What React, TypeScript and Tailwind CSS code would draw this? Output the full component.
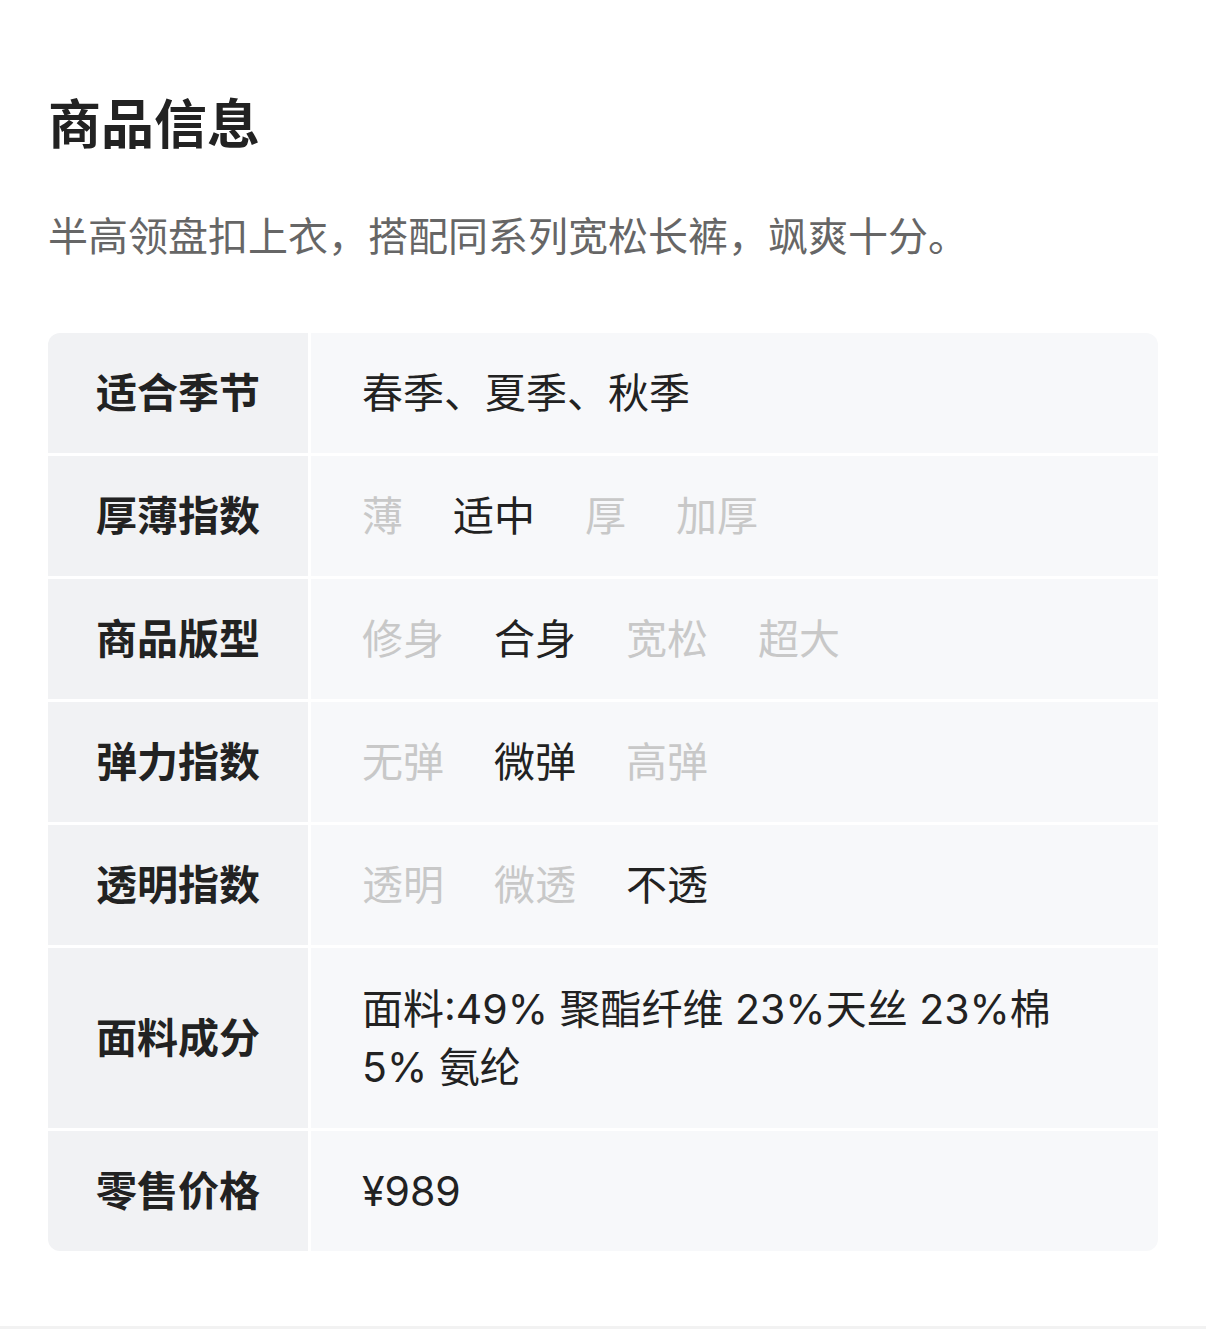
import React from "react";

const font = { fontFamily: "Inter, 'Noto Sans CJK SC', sans-serif" };

type Opt = { t: string; on: boolean };

function Options({ items }: { items: Opt[] }) {
  return (
    <div className="flex gap-[50px]">
      {items.map((o, i) => (
        <span key={i} className={o.on ? "text-[#222222]" : "text-[#c8c8c8]"}>
          {o.t}
        </span>
      ))}
    </div>
  );
}

export default function App() {
  const rows: { label: string; value: React.ReactNode; tall?: boolean }[] = [
    { label: "适合季节", value: <span className="text-[#222222]">春季、夏季、秋季</span> },
    {
      label: "厚薄指数",
      value: (
        <Options
          items={[
            { t: "薄", on: false },
            { t: "适中", on: true },
            { t: "厚", on: false },
            { t: "加厚", on: false },
          ]}
        />
      ),
    },
    {
      label: "商品版型",
      value: (
        <Options
          items={[
            { t: "修身", on: false },
            { t: "合身", on: true },
            { t: "宽松", on: false },
            { t: "超大", on: false },
          ]}
        />
      ),
    },
    {
      label: "弹力指数",
      value: (
        <Options
          items={[
            { t: "无弹", on: false },
            { t: "微弹", on: true },
            { t: "高弹", on: false },
          ]}
        />
      ),
    },
    {
      label: "透明指数",
      value: (
        <Options
          items={[
            { t: "透明", on: false },
            { t: "微透", on: false },
            { t: "不透", on: true },
          ]}
        />
      ),
    },
    {
      label: "面料成分",
      value: <span className="text-[#222222]">面料:49% 聚酯纤维 23%天丝 23%棉 5% 氨纶</span>,
      tall: true,
    },
    { label: "零售价格", value: <span className="text-[#222222]">¥989</span> },
  ];

  return (
    <div className="w-[1206px] h-[1329px] bg-white flex flex-col" style={font}>
      <div className="px-[48px] pt-[89px] flex flex-col">
        <h1 className="text-[53px] leading-[72px] font-bold text-[#222222]">商品信息</h1>
        <p className="mt-[48px] text-[40px] leading-[56px] text-[#666666]">
          半高领盘扣上衣，搭配同系列宽松长裤，飒爽十分。
        </p>
        <div className="mt-[68px] grid grid-cols-[260px_1fr] gap-[3px] rounded-[12px] overflow-hidden bg-white">
          {rows.map((r, i) => (
            <React.Fragment key={i}>
              <div className="bg-[#f1f2f4] pl-[48px] flex items-center text-[41px] leading-[58px] font-bold text-[#222222]">
                {r.label}
              </div>
              <div
                className={
                  r.tall
                    ? "bg-[#f7f8fa] pl-[51px] pr-[50px] py-[32px] text-[41px] leading-[58px]"
                    : "bg-[#f7f8fa] pl-[51px] pr-[50px] py-[31px] text-[41px] leading-[58px]"
                }
              >
                {r.value}
              </div>
            </React.Fragment>
          ))}
        </div>
      </div>
      <div className="flex-1" />
      <div className="h-[3px] bg-[#f2f2f2]" />
    </div>
  );
}
